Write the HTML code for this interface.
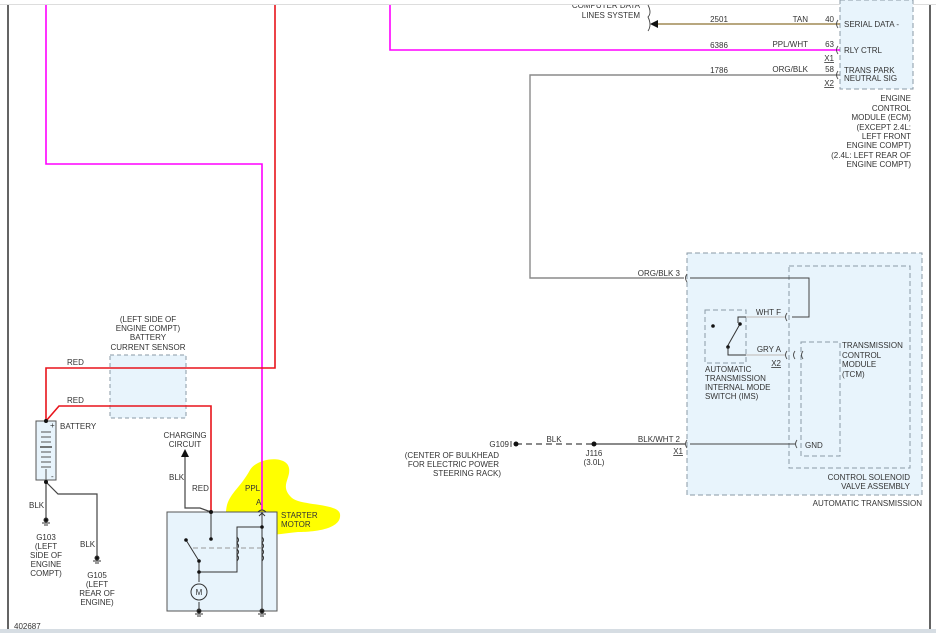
<!DOCTYPE html>
<html><head><meta charset="utf-8"><style>
html,body{margin:0;padding:0;background:#fff;}
svg{display:block;}
text{font-family:"Liberation Sans",sans-serif;font-size:8px;fill:#333;}
</style></head><body>
<svg width="936" height="633" viewBox="0 0 936 633" xmlns="http://www.w3.org/2000/svg">
<rect x="0" y="0" width="936" height="633" fill="#fff"/>
<text x="640" y="8" text-anchor="end" font-size="7.5">COMPUTER DATA</text>
<rect x="0" y="0" width="936" height="4" fill="#fff"/>
<line x1="0" y1="4.5" x2="936" y2="4.5" stroke="#ddd" stroke-width="1"/>
<line x1="8" y1="5" x2="8" y2="633" stroke="#111" stroke-width="1.3"/>
<line x1="930" y1="5" x2="930" y2="630" stroke="#111" stroke-width="1.3"/>
<rect x="0" y="629" width="936" height="4" fill="#d6dde3"/>
<text x="14" y="629" font-size="7">402687</text>

<!-- yellow highlight -->
<path d="M250,470 C258,457 287,455 289,468 C291,479 279,486 292,498 C302,506 338,503 340,514 C342,528 318,532 298,532 C278,534 268,537 246,533 C226,531 224,518 227,505 C231,492 240,488 250,470 Z" fill="#ffff00"/>

<!-- boxes fill -->
<rect x="840" y="0" width="73" height="89" fill="#e8f4fc" stroke="#8a9aa6" stroke-dasharray="5,3"/>
<rect x="687" y="253" width="235" height="242" fill="#e8f4fc" stroke="#8a9aa6" stroke-dasharray="5,3"/>
<rect x="789" y="266" width="121" height="202" fill="none" stroke="#8a9aa6" stroke-dasharray="5,3"/>
<rect x="801" y="342" width="39" height="114" fill="none" stroke="#8a9aa6" stroke-dasharray="5,3"/>
<rect x="705" y="310" width="41" height="53" fill="none" stroke="#8a9aa6" stroke-dasharray="5,3"/>
<rect x="110" y="355" width="76" height="63" fill="#e8f4fc" stroke="#8a9aa6" stroke-dasharray="4,3"/>
<rect x="167" y="512" width="110" height="99" fill="#e8f4fc" stroke="#555"/>
<rect x="36" y="421" width="20" height="59" fill="#e8f4fc" stroke="#555"/>

<!-- wires -->
<polyline points="46,5 46,164 262,164 262,510" fill="none" stroke="#ff00ff" stroke-width="1.6"/>
<polyline points="390,5 390,50 840,50" fill="none" stroke="#ff00ff" stroke-width="1.6"/>
<polyline points="275,5 275,368 46,368 46,421" fill="none" stroke="#e8141c" stroke-width="1.6"/>
<polyline points="46,421 59,406 211,406 211,512" fill="none" stroke="#e8141c" stroke-width="1.6"/>
<line x1="656" y1="24" x2="840" y2="24" stroke="#a08a55" stroke-width="1.6"/>
<polygon points="650,24 658,20 658,28" fill="#111"/>
<polyline points="840,75 530,75 530,278 684,278" fill="none" stroke="#8a8a8a" stroke-width="1.4"/>
<polyline points="46,480 46,520" fill="none" stroke="#444" stroke-width="1.2"/>
<polyline points="46,482 58,494 97,494 97,560" fill="none" stroke="#444" stroke-width="1.2"/>
<polyline points="185,455 185,508 200,508 211,512" fill="none" stroke="#444" stroke-width="1.2"/>
<polygon points="185,449 181,457 189,457" fill="#111"/>
<line x1="516" y1="444" x2="594" y2="444" stroke="#444" stroke-width="1.2" stroke-dasharray="6,4"/>
<line x1="594" y1="444" x2="685" y2="444" stroke="#444" stroke-width="1.2"/>
<circle cx="516" cy="444" r="2.5" fill="#111"/><circle cx="594" cy="444" r="2.5" fill="#111"/>
<line x1="511" y1="441" x2="511" y2="447" stroke="#444"/>
<line x1="690" y1="444" x2="795" y2="444" stroke="#444" stroke-width="1"/>
<polyline points="690,278 809,278 809,317 792,317" fill="none" stroke="#444"/>
<line x1="746" y1="317" x2="785" y2="317" stroke="#ccc" stroke-width="1.4"/>
<line x1="746" y1="355" x2="785" y2="355" stroke="#ccc" stroke-width="1.4"/>
<polyline points="738,323 738,317 746,317" fill="none" stroke="#333"/>
<line x1="727" y1="347" x2="740" y2="324" stroke="#333"/>
<circle cx="740" cy="324" r="1.8" fill="#111"/><circle cx="728" cy="347" r="1.8" fill="#111"/><circle cx="713" cy="326" r="1.8" fill="#111"/>
<polyline points="728,347 728,355 746,355" fill="none" stroke="#333"/>
<g fill="none" stroke="#444" stroke-width="0.9">
<path d="M838,20 q-3,4 0,8 M838,46 q-3,4 0,8 M838,71 q-3,4 0,8"/>
<path d="M687,274 q-3,4 0,8 M687,440 q-3,4 0,8 M787,313 q-3,4 0,8 M787,351 q-3,4 0,8 M795,351 q-3,4 0,8 M803,351 q-3,4 0,8 M797,440 q-3,4 0,8"/>
<path d="M648,5 q4,8 0,12 q4,8 0,14"/>
</g>
<text x="640" y="18" text-anchor="end">LINES SYSTEM</text>
<text x="719" y="22" text-anchor="middle">2501</text><text x="808" y="22" text-anchor="end">TAN</text><text x="834" y="22" text-anchor="end">40</text>
<text x="719" y="48" text-anchor="middle">6386</text><text x="808" y="47" text-anchor="end">PPL/WHT</text><text x="834" y="47" text-anchor="end">63</text>
<text x="834" y="61" text-anchor="end" text-decoration="underline">X1</text>
<text x="719" y="73" text-anchor="middle">1786</text><text x="808" y="72" text-anchor="end">ORG/BLK</text><text x="834" y="72" text-anchor="end">58</text>
<text x="834" y="86" text-anchor="end" text-decoration="underline">X2</text>
<text x="844" y="27">SERIAL DATA -</text><text x="844" y="53">RLY CTRL</text>
<text x="844" y="73">TRANS PARK</text><text x="844" y="81">NEUTRAL SIG</text>
<g text-anchor="end">
<text x="911" y="101">ENGINE</text><text x="911" y="111">CONTROL</text><text x="911" y="120">MODULE (ECM)</text>
<text x="911" y="130">(EXCEPT 2.4L:</text><text x="911" y="139">LEFT FRONT</text><text x="911" y="148">ENGINE COMPT)</text>
<text x="911" y="158">(2.4L: LEFT REAR OF</text><text x="911" y="167">ENGINE COMPT)</text>
<text x="680" y="276">ORG/BLK  3</text>
<text x="680" y="442">BLK/WHT  2</text>
<text x="683" y="454" text-decoration="underline">X1</text>
<text x="509" y="447">G109</text>
<text x="499" y="458">(CENTER OF BULKHEAD</text><text x="499" y="467">FOR ELECTRIC POWER</text><text x="501" y="476">STEERING RACK)</text>
<text x="910" y="480">CONTROL SOLENOID</text><text x="910" y="489">VALVE ASSEMBLY</text>
<text x="922" y="506">AUTOMATIC TRANSMISSION</text>
<text x="781" y="315">WHT  F</text><text x="781" y="352">GRY  A</text>
<text x="781" y="366" text-decoration="underline">X2</text>
</g>
<text x="554" y="442" text-anchor="middle">BLK</text>
<text x="594" y="456" text-anchor="middle">J116</text><text x="594" y="465" text-anchor="middle">(3.0L)</text>
<text x="705" y="372">AUTOMATIC</text><text x="705" y="381">TRANSMISSION</text><text x="705" y="390">INTERNAL MODE</text><text x="705" y="399">SWITCH (IMS)</text>
<text x="842" y="348">TRANSMISSION</text><text x="842" y="358">CONTROL</text><text x="842" y="367">MODULE</text><text x="842" y="377">(TCM)</text>
<text x="805" y="448">GND</text>

<g text-anchor="middle">
<text x="148" y="322">(LEFT SIDE OF</text><text x="148" y="331">ENGINE COMPT)</text><text x="148" y="340">BATTERY</text><text x="148" y="350">CURRENT SENSOR</text>
<text x="185" y="438">CHARGING</text><text x="185" y="447">CIRCUIT</text>
<text x="46" y="540">G103</text><text x="46" y="549">(LEFT</text><text x="46" y="558">SIDE OF</text><text x="46" y="567">ENGINE</text><text x="46" y="576">COMPT)</text>
<text x="97" y="578">G105</text><text x="97" y="587">(LEFT</text><text x="97" y="596">REAR OF</text><text x="97" y="605">ENGINE)</text>
</g>
<text x="67" y="365">RED</text><text x="67" y="403">RED</text>
<text x="60" y="429">BATTERY</text>
<text x="29" y="508">BLK</text><text x="80" y="547">BLK</text>
<text x="169" y="480">BLK</text><text x="192" y="491">RED</text>
<text x="245" y="491">PPL</text><text x="256" y="505">A</text>
<text x="281" y="518">STARTER</text><text x="281" y="527">MOTOR</text>
<g stroke="#555" stroke-width="1">
<line x1="41" y1="432" x2="51" y2="432"/><line x1="41" y1="437" x2="51" y2="437"/><line x1="41" y1="442" x2="51" y2="442"/>
<line x1="40" y1="447" x2="52" y2="447" stroke-width="1.6"/><line x1="41" y1="452" x2="51" y2="452"/><line x1="41" y1="457" x2="51" y2="457"/><line x1="41" y1="462" x2="51" y2="462"/><line x1="41" y1="467" x2="51" y2="467"/>
<line x1="46" y1="469" x2="46" y2="480"/>
</g>
<text x="50" y="428" font-size="7">+</text><text x="51" y="479" font-size="7">-</text>
<circle cx="46" cy="421" r="2" fill="#111"/><circle cx="46" cy="482" r="2" fill="#111"/>
<g stroke="#333" stroke-width="1">
<circle cx="46" cy="520" r="2" fill="#111"/><line x1="42" y1="523" x2="50" y2="523"/><line x1="44" y1="525" x2="48" y2="525"/>
<circle cx="97" cy="558" r="2" fill="#111"/><line x1="93" y1="561" x2="101" y2="561"/><line x1="95" y1="563" x2="99" y2="563"/>
<circle cx="199" cy="611" r="2" fill="#111"/><line x1="195" y1="614" x2="203" y2="614"/><line x1="197" y1="616" x2="201" y2="616"/>
<circle cx="262" cy="611" r="2" fill="#111"/><line x1="258" y1="614" x2="266" y2="614"/><line x1="260" y1="616" x2="264" y2="616"/>
</g>
<g fill="none" stroke="#333" stroke-width="1">
<line x1="211" y1="512" x2="211" y2="539"/>
<polyline points="262,512 262,611"/>
<polyline points="262,527 237,527 237,572 199,572"/>
<line x1="186" y1="540" x2="199" y2="561"/>
<line x1="199" y1="561" x2="199" y2="582"/>
<line x1="199" y1="602" x2="199" y2="611"/>
<circle cx="199" cy="592" r="8" fill="#e8f4fc"/>
<path d="M237,537 q3,3 0,6 q3,3 0,6 q3,3 0,6 q3,3 0,6 M262,537 q3,3 0,6 q3,3 0,6 q3,3 0,6 q3,3 0,6"/>
<line x1="193" y1="548" x2="262" y2="548" stroke="#999" stroke-dasharray="5,3"/>
<path d="M258,512 q4,-4 8,0"/>
<line x1="262" y1="513" x2="259" y2="516"/><line x1="262" y1="513" x2="265" y2="516"/>
</g>
<text x="199" y="595" text-anchor="middle" font-size="9">M</text>
<g fill="#111"><circle cx="211" cy="512" r="2"/><circle cx="211" cy="539" r="1.8"/><circle cx="186" cy="540" r="1.8"/><circle cx="199" cy="561" r="1.8"/><circle cx="199" cy="572" r="1.8"/><circle cx="262" cy="527" r="1.8"/></g>
</svg>
</body></html>
